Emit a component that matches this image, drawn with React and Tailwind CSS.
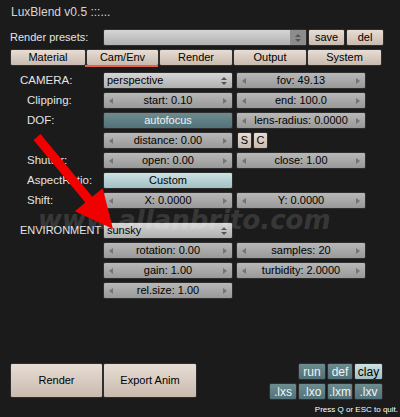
import React from 'react'

const beige = 'bg-gradient-to-b from-[#e8ddd4] to-[#c9baae] text-black border border-[#2e2e2e] rounded-[2px]'
const grey = 'bg-gradient-to-b from-[#b8b8b8] to-[#999999] text-black border border-[#2e2e2e] rounded-[2px]'
const tealDark = 'bg-gradient-to-b from-[#6c8c8f] to-[#52727a] text-[#eef4f4] border border-[#2e2e2e] rounded-[2px]'
const tealLight = 'bg-gradient-to-b from-[#cde2e3] to-[#a2c0c3] text-black border border-[#2e2e2e] rounded-[2px]'

const LeftTri = () => (
  <span className="absolute left-[5px] top-1/2 -translate-y-1/2 w-0 h-0 border-y-[3px] border-y-transparent border-r-[4px] border-r-[#747474]" />
)
const RightTri = () => (
  <span className="absolute right-[5px] top-1/2 -translate-y-1/2 w-0 h-0 border-y-[3px] border-y-transparent border-l-[4px] border-l-[#747474]" />
)

const Num = ({ children }) => (
  <div className={`relative w-[130px] h-[17px] flex items-center justify-center ${grey}`}>
    <LeftTri />
    <span className="leading-none">{children}</span>
    <RightTri />
  </div>
)

const UpDown = ({ dark }) => (
  <div className={`flex flex-col items-center justify-center gap-[2px] w-[16px] h-full ${dark ? 'bg-[#8c8c8c]' : ''}`}>
    <span className="w-0 h-0 border-x-[3px] border-x-transparent border-b-[3px] border-b-[#555]" />
    <span className="w-0 h-0 border-x-[3px] border-x-transparent border-t-[3px] border-t-[#555]" />
  </div>
)

const Drop = ({ children, w = 'w-[130px]', dark }) => (
  <div className={`${w} h-[17px] flex items-center overflow-hidden bg-gradient-to-b from-[#d6d6d6] to-[#b0b0b0] text-black border border-[#2e2e2e] rounded-[2px]`}>
    <span className="flex-1 pl-[3px] leading-none">{children}</span>
    <UpDown dark={dark} />
  </div>
)

const Btn = ({ children, cls, w = 'w-[130px]' }) => (
  <div className={`${w} h-[17px] flex items-center justify-center ${cls}`}>
    <span className="leading-none">{children}</span>
  </div>
)

const Row = ({ label, indent = 'pl-[17px]', children, cls = 'mt-[3px]', size = 'text-[11.5px]' }) => (
  <div className={`flex items-center h-[17px] pl-[10px] ${cls}`}>
    <div className={`w-[93px] shrink-0 ${indent} ${size} text-[#e4e4e4] whitespace-nowrap`}>{label}</div>
    <div className="flex items-center gap-[3px]">{children}</div>
  </div>
)

export default function App() {
  return (
    <div className="relative w-[400px] h-[417px] overflow-hidden bg-[#1b1b1b] font-['Liberation_Sans',Arial,sans-serif] text-[11px] flex flex-col">
      <div className="h-[28px] pl-[11px] pt-[3px] text-[12px] text-[#d6d6d6]">LuxBlend v0.5 :::...</div>

      <div className="flex items-center h-[17px] mt-[1px] pl-[10px]">
        <div className="w-[93px] text-[11px] text-[#e4e4e4]">Render presets:</div>
        <Drop w="w-[204px]" dark />
        <Btn cls={beige} w="w-[37px] ml-[1px]">save</Btn>
        <Btn cls={beige} w="w-[38px] ml-[1px]">del</Btn>
      </div>

      <div className="flex h-[16px] mt-[3px] pl-[10px]">
        <Btn cls={beige} w="w-[76px]">Material</Btn>
        <Btn cls={beige} w="w-[73px]">Cam/Env</Btn>
        <Btn cls={beige} w="w-[74px]">Render</Btn>
        <Btn cls={beige} w="w-[74px]">Output</Btn>
        <Btn cls={beige} w="w-[75px]">System</Btn>
      </div>
      <div className="ml-[85px] w-[73px] h-[2px] bg-[#e8604c]" />

      <Row label="CAMERA:" indent="pl-[10px]" cls="mt-[5px]">
        <Drop>perspective</Drop>
        <Num>fov: 49.13</Num>
      </Row>
      <Row label="Clipping:">
        <Num>start: 0.10</Num>
        <Num>end: 100.0</Num>
      </Row>
      <Row label="DOF:">
        <Btn cls={tealDark}>autofocus</Btn>
        <Num>lens-radius: 0.0000</Num>
      </Row>
      <Row label="">
        <Num>distance: 0.00</Num>
        <div className="flex gap-[1px] ml-[1px]">
          <Btn cls={beige} w="w-[15px]">S</Btn>
          <Btn cls={beige} w="w-[15px]">C</Btn>
        </div>
      </Row>
      <Row label="Shutter:">
        <Num>open: 0.00</Num>
        <Num>close: 1.00</Num>
      </Row>
      <Row label="AspectRatio:">
        <Btn cls={tealLight}>Custom</Btn>
      </Row>
      <Row label="Shift:">
        <Num>X: 0.0000</Num>
        <Num>Y: 0.0000</Num>
      </Row>

      <Row label="ENVIRONMENT" indent="pl-[10px]" cls="mt-[13px]" size="text-[11px]">
        <Drop>sunsky</Drop>
      </Row>
      <Row label="">
        <Num>rotation: 0.00</Num>
        <Num>samples: 20</Num>
      </Row>
      <Row label="">
        <Num>gain: 1.00</Num>
        <Num>turbidity: 2.0000</Num>
      </Row>
      <Row label="">
        <Num>rel.size: 1.00</Num>
      </Row>

      <div className="mt-auto flex flex-col">
        <div className="flex justify-between items-start pl-[10px] pr-[17px]">
          <div className="flex">
            <div className={`w-[93px] h-[35px] flex items-center justify-center ${beige}`}>Render</div>
            <div className={`w-[94px] h-[35px] flex items-center justify-center ${beige}`}>Export Anim</div>
          </div>
          <div className="flex flex-col items-end gap-[3px] text-[12px]">
            <div className="flex gap-[1px]">
              <Btn cls={tealDark} w="w-[28px] h-[16px]">run</Btn>
              <Btn cls={tealDark} w="w-[26px] h-[16px]">def</Btn>
              <Btn cls={tealLight} w="w-[29px] h-[16px]">clay</Btn>
            </div>
            <div className="flex gap-[1px]">
              <Btn cls={tealDark} w="w-[28px] h-[16px]">.lxs</Btn>
              <Btn cls={tealDark} w="w-[28px] h-[16px]">.lxo</Btn>
              <Btn cls={tealDark} w="w-[26px] h-[16px]">.lxm</Btn>
              <Btn cls={tealDark} w="w-[29px] h-[16px]">.lxv</Btn>
            </div>
          </div>
        </div>
        <div className="h-[12px] mt-[4px] mb-[1px] pr-[2px] text-right text-[8px] leading-[12px] text-white">Press Q or ESC to quit.</div>
      </div>

      {/* watermark */}
      <div className="absolute left-[38px] top-[207px] text-[26px] leading-none font-bold italic font-['DejaVu_Sans',sans-serif] text-white/15 whitespace-nowrap pointer-events-none">
        www.allanbrito.com
      </div>

      {/* red arrow */}
      <svg className="absolute left-0 top-0 pointer-events-none" width="400" height="417" viewBox="0 0 400 417">
        <polygon
          fill="#f20000"
          points="33.5,139.9 40.5,134.1 92.3,196.8 102.7,188.2 113,229 74.9,211.2 85.3,202.6"
        />
      </svg>
    </div>
  )
}
